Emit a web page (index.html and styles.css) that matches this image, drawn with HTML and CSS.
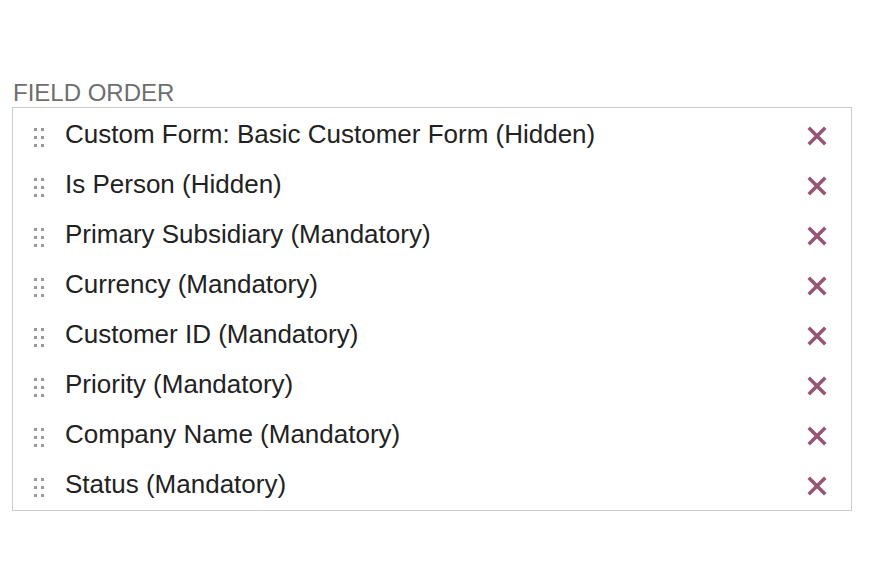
FILE: index.html
```html
<!DOCTYPE html>
<html lang="en">
<head>
<meta charset="utf-8">
<title>Field Order</title>
<link rel="stylesheet" href="styles.css">
</head>
<body>
<section class="panel">
  <div class="label">FIELD ORDER</div>
  <ul class="list">
    <li class="row"><svg class="handle" width="10" height="19" viewBox="0 0 10 19"><g fill="#9a9a9a"><rect x="0" y="0" width="3" height="3"/><rect x="7" y="0" width="3" height="3"/><rect x="0" y="8" width="3" height="3"/><rect x="7" y="8" width="3" height="3"/><rect x="0" y="16" width="3" height="3"/><rect x="7" y="16" width="3" height="3"/></g></svg><span class="name">Custom Form: Basic Customer Form (Hidden)</span><svg class="remove" width="20" height="20" viewBox="0 0 20 20"><path d="M3 3L17 17M17 3L3 17" stroke="#955775" stroke-width="3.6" stroke-linecap="square"/></svg></li>
    <li class="row"><svg class="handle" width="10" height="19" viewBox="0 0 10 19"><g fill="#9a9a9a"><rect x="0" y="0" width="3" height="3"/><rect x="7" y="0" width="3" height="3"/><rect x="0" y="8" width="3" height="3"/><rect x="7" y="8" width="3" height="3"/><rect x="0" y="16" width="3" height="3"/><rect x="7" y="16" width="3" height="3"/></g></svg><span class="name">Is Person (Hidden)</span><svg class="remove" width="20" height="20" viewBox="0 0 20 20"><path d="M3 3L17 17M17 3L3 17" stroke="#955775" stroke-width="3.6" stroke-linecap="square"/></svg></li>
    <li class="row"><svg class="handle" width="10" height="19" viewBox="0 0 10 19"><g fill="#9a9a9a"><rect x="0" y="0" width="3" height="3"/><rect x="7" y="0" width="3" height="3"/><rect x="0" y="8" width="3" height="3"/><rect x="7" y="8" width="3" height="3"/><rect x="0" y="16" width="3" height="3"/><rect x="7" y="16" width="3" height="3"/></g></svg><span class="name">Primary Subsidiary (Mandatory)</span><svg class="remove" width="20" height="20" viewBox="0 0 20 20"><path d="M3 3L17 17M17 3L3 17" stroke="#955775" stroke-width="3.6" stroke-linecap="square"/></svg></li>
    <li class="row"><svg class="handle" width="10" height="19" viewBox="0 0 10 19"><g fill="#9a9a9a"><rect x="0" y="0" width="3" height="3"/><rect x="7" y="0" width="3" height="3"/><rect x="0" y="8" width="3" height="3"/><rect x="7" y="8" width="3" height="3"/><rect x="0" y="16" width="3" height="3"/><rect x="7" y="16" width="3" height="3"/></g></svg><span class="name">Currency (Mandatory)</span><svg class="remove" width="20" height="20" viewBox="0 0 20 20"><path d="M3 3L17 17M17 3L3 17" stroke="#955775" stroke-width="3.6" stroke-linecap="square"/></svg></li>
    <li class="row"><svg class="handle" width="10" height="19" viewBox="0 0 10 19"><g fill="#9a9a9a"><rect x="0" y="0" width="3" height="3"/><rect x="7" y="0" width="3" height="3"/><rect x="0" y="8" width="3" height="3"/><rect x="7" y="8" width="3" height="3"/><rect x="0" y="16" width="3" height="3"/><rect x="7" y="16" width="3" height="3"/></g></svg><span class="name">Customer ID (Mandatory)</span><svg class="remove" width="20" height="20" viewBox="0 0 20 20"><path d="M3 3L17 17M17 3L3 17" stroke="#955775" stroke-width="3.6" stroke-linecap="square"/></svg></li>
    <li class="row"><svg class="handle" width="10" height="19" viewBox="0 0 10 19"><g fill="#9a9a9a"><rect x="0" y="0" width="3" height="3"/><rect x="7" y="0" width="3" height="3"/><rect x="0" y="8" width="3" height="3"/><rect x="7" y="8" width="3" height="3"/><rect x="0" y="16" width="3" height="3"/><rect x="7" y="16" width="3" height="3"/></g></svg><span class="name">Priority (Mandatory)</span><svg class="remove" width="20" height="20" viewBox="0 0 20 20"><path d="M3 3L17 17M17 3L3 17" stroke="#955775" stroke-width="3.6" stroke-linecap="square"/></svg></li>
    <li class="row"><svg class="handle" width="10" height="19" viewBox="0 0 10 19"><g fill="#9a9a9a"><rect x="0" y="0" width="3" height="3"/><rect x="7" y="0" width="3" height="3"/><rect x="0" y="8" width="3" height="3"/><rect x="7" y="8" width="3" height="3"/><rect x="0" y="16" width="3" height="3"/><rect x="7" y="16" width="3" height="3"/></g></svg><span class="name">Company Name (Mandatory)</span><svg class="remove" width="20" height="20" viewBox="0 0 20 20"><path d="M3 3L17 17M17 3L3 17" stroke="#955775" stroke-width="3.6" stroke-linecap="square"/></svg></li>
    <li class="row"><svg class="handle" width="10" height="19" viewBox="0 0 10 19"><g fill="#9a9a9a"><rect x="0" y="0" width="3" height="3"/><rect x="7" y="0" width="3" height="3"/><rect x="0" y="8" width="3" height="3"/><rect x="7" y="8" width="3" height="3"/><rect x="0" y="16" width="3" height="3"/><rect x="7" y="16" width="3" height="3"/></g></svg><span class="name">Status (Mandatory)</span><svg class="remove" width="20" height="20" viewBox="0 0 20 20"><path d="M3 3L17 17M17 3L3 17" stroke="#955775" stroke-width="3.6" stroke-linecap="square"/></svg></li>
  </ul>
</section>
</body>
</html>
```

FILE: styles.css
```css
html, body {
  margin: 0;
  padding: 0;
  background: #ffffff;
}

body {
  font-family: "Liberation Sans", Arial, Helvetica, sans-serif;
}

.panel {
  padding: 80px 0 0 12px;
  width: 840px;
}

.label {
  font-size: 24px;
  line-height: 26px;
  color: #6e6e6e;
  padding-left: 1px;
  margin-bottom: 1px;
}

.list {
  list-style: none;
  margin: 0;
  padding: 1px 0;
  border: 1px solid #cccccc;
}

.row {
  display: flex;
  align-items: center;
  height: 50px;
  padding: 0 24px 0 21px;
}

.handle {
  flex: none;
  margin-top: 6px;
}

.name {
  flex: 1;
  margin-left: 21px;
  font-size: 26px;
  line-height: 50px;
  color: #222222;
}

.remove {
  flex: none;
  margin-top: 4px;
}
```
